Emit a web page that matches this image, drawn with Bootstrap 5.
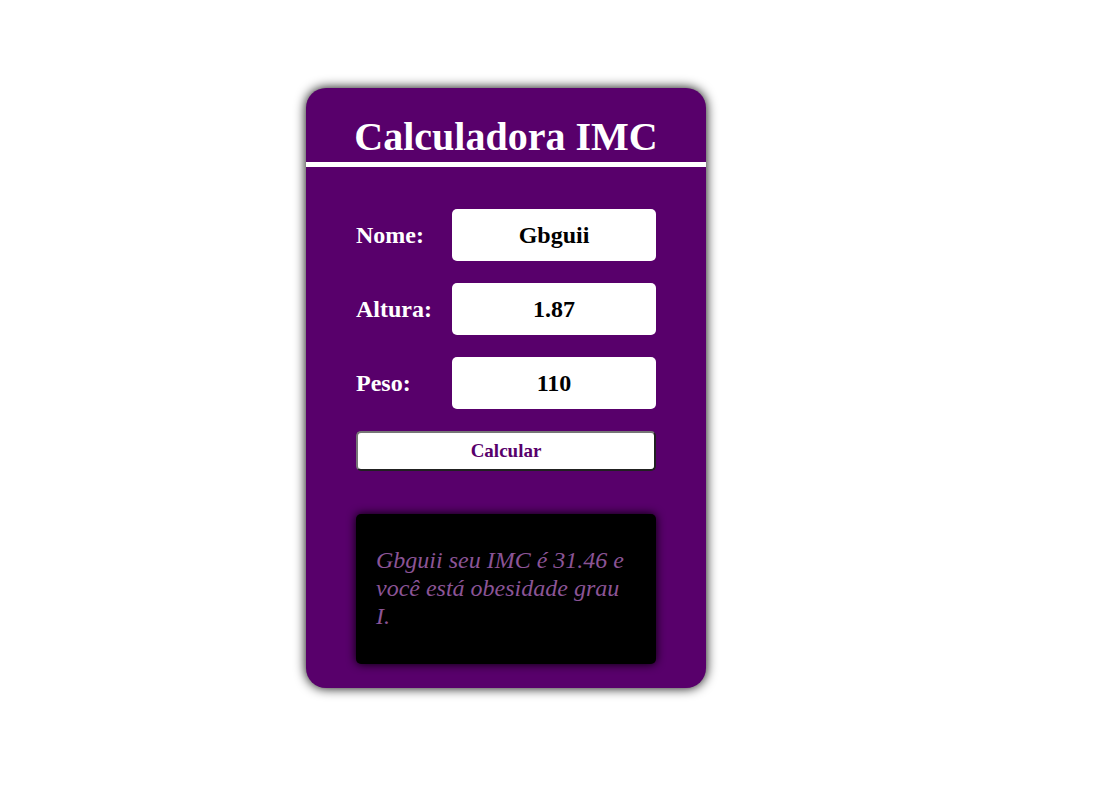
<!DOCTYPE html>
<html lang="pt-BR">
<head>
<meta charset="utf-8">
<meta name="viewport" content="width=device-width, initial-scale=1">
<title>Calculadora IMC</title>
<link href="https://cdn.jsdelivr.net/npm/bootstrap@5.3.0/dist/css/bootstrap.min.css" rel="stylesheet">
<style>
  body { font-family: "Liberation Serif", "Times New Roman", serif; background: #fff; }
  .page { padding: 88px 81px 88px 0; }
  .calc { width: 400px; max-width: 100%; background: #58006b; border-radius: 20px; box-shadow: 0 0 12px #000; padding-bottom: 24px; }
  .calc-title { font-size: 40px; line-height: 46px; padding: 26px 0 2px; border-bottom: 5px solid #fff; }
  .calc-form { padding: 42px 50px 0; gap: 22px; }
  .field-label { font-size: 24px; line-height: 28px; }
  .field-input { width: 204px; height: 52px; font-size: 24px; border-radius: 5px; }
  .calc-btn { height: 40px; font-size: 19px; line-height: 22px; color: #58006b; border: 2px solid; border-color: #767676 #212121 #212121 #767676; border-radius: 5px; }
  .result { margin: 43px 50px 0; min-height: 150px; padding: 32px 20px; background: #000; border-radius: 5px; box-shadow: 0 0 10px #000; color: #8b5496; font-size: 24px; line-height: 28px; }
</style>
</head>
<body>
<main class="page d-flex justify-content-center">
  <section class="calc text-white">
    <h1 class="calc-title fw-bold text-center mb-0">Calculadora IMC</h1>
    <form class="calc-form d-flex flex-column" onsubmit="return false">
      <div class="d-flex align-items-center justify-content-between">
        <label class="field-label fw-bold" for="nome">Nome:</label>
        <input class="field-input border-0 bg-white text-black fw-bold text-center" type="text" id="nome" value="Gbguii">
      </div>
      <div class="d-flex align-items-center justify-content-between">
        <label class="field-label fw-bold" for="altura">Altura:</label>
        <input class="field-input border-0 bg-white text-black fw-bold text-center" type="text" id="altura" value="1.87">
      </div>
      <div class="d-flex align-items-center justify-content-between">
        <label class="field-label fw-bold" for="peso">Peso:</label>
        <input class="field-input border-0 bg-white text-black fw-bold text-center" type="text" id="peso" value="110">
      </div>
      <button class="calc-btn bg-white fw-bold w-100 p-0" type="submit">Calcular</button>
    </form>
    <div class="result fst-italic">Gbguii seu IMC é 31.46 e você está obesidade grau I.</div>
  </section>
</main>
<script src="https://cdn.jsdelivr.net/npm/bootstrap@5.3.0/dist/js/bootstrap.bundle.min.js"></script>
</body>
</html>
